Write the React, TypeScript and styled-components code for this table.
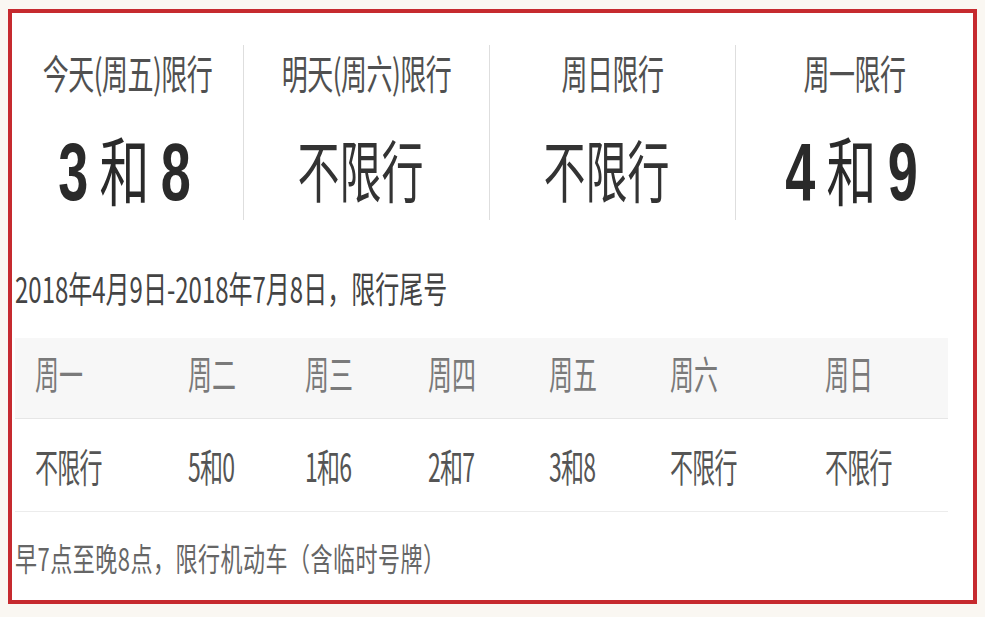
import React from 'react'
import styled, { createGlobalStyle } from 'styled-components'

const GlobalStyle = createGlobalStyle`
  html, body {
    margin: 0;
    padding: 0;
    background: #faf7f2;
  }
  body {
    font-family: "Noto Sans CJK SC", "Noto Sans", sans-serif;
  }
`

const Card = styled.div`
  box-sizing: border-box;
  width: 969px;
  height: 595px;
  margin: 9px 0 0 8px;
  border: 4px solid #c62a2f;
  background: #fff;
  display: flex;
  flex-direction: column;
`

// the screenshot is stretched vertically, so text glyphs are drawn taller than wide
const Tall = styled.span<{ $y: number }>`
  display: inline-block;
  transform: scaleY(${p => p.$y});
  transform-origin: center;
`

const Today = styled.div`
  display: grid;
  grid-template-columns: 231px 246px 246px 1fr;
  margin-top: 32px;
`

const DayCol = styled.div`
  height: 175px;
  box-sizing: border-box;
  padding-top: 9px;
  text-align: center;
  & + & {
    border-left: 1px solid #dedede;
  }
`

const DayTitle = styled.div`
  font-size: 26px;
  line-height: 36px;
  color: #505050;
  letter-spacing: -0.5px;
`

const DayValue = styled.div<{ $num?: boolean }>`
  margin-top: 38px;
  line-height: 80px;
  font-size: ${p => (p.$num ? '50px' : '42px')};
  color: ${p => (p.$num ? '#2a2a2a' : '#333')};
  white-space: nowrap;
  padding-right: ${p => (p.$num ? '6px' : '12px')};
`

const Digit = styled.span`
  font-family: "Liberation Sans", Arial, sans-serif;
  font-weight: 700;
  font-size: 54px;
`

const RangeLine = styled.div`
  margin-top: 48px;
  padding: 0 3px;
  font-size: 24px;
  line-height: 40px;
  color: #444;
  white-space: nowrap;
`

const Table = styled.table`
  margin: 30px 0 0 3px;
  width: 933px;
  border-collapse: collapse;
  table-layout: fixed;
`

const HeadRow = styled.tr`
  background: #f7f7f7;
  border-bottom: 1px solid #e6e6e6;
`

const BodyRow = styled.tr`
  border-bottom: 1px solid #ececec;
`

const HeadCell = styled.th`
  height: 80px;
  box-sizing: border-box;
  padding: 0 0 10px 20px;
  text-align: left;
  font-weight: 400;
  font-size: 24px;
  color: #7a7a7a;
`

const Cell = styled.td`
  height: 92px;
  padding: 0 0 0 20px;
  font-size: 23px;
  color: #555;
  letter-spacing: -0.8px;
`

const Note = styled.div`
  margin-top: 24px;
  padding: 0 3px;
  font-size: 22px;
  line-height: 40px;
  color: #666;
  letter-spacing: 0.5px;
  white-space: nowrap;
`

const days = [
  { title: '今天(周五)限行', value: ['3', '8'] },
  { title: '明天(周六)限行', value: null },
  { title: '周日限行', value: null },
  { title: '周一限行', value: ['4', '9'] },
]

const widths = [153, 117, 123, 121, 121, 155, 143]
const week = ['周一', '周二', '周三', '周四', '周五', '周六', '周日']
const plates = ['不限行', '5和0', '1和6', '2和7', '3和8', '不限行', '不限行']

const App = () => {
  return <>
    <GlobalStyle />
    <Card>
      <Today>
        {days.map(d => (
          <DayCol key={d.title}>
            <DayTitle><Tall $y={1.55}>{d.title}</Tall></DayTitle>
            {d.value ? (
              <DayValue $num>
                <Tall $y={1.5}>
                  <Digit>{d.value[0]}</Digit> 和 <Digit>{d.value[1]}</Digit>
                </Tall>
              </DayValue>
            ) : (
              <DayValue><Tall $y={1.6}>不限行</Tall></DayValue>
            )}
          </DayCol>
        ))}
      </Today>
      <RangeLine><Tall $y={1.5}>2018年4月9日-2018年7月8日，限行尾号</Tall></RangeLine>
      <Table>
        <colgroup>
          {widths.map((w, i) => <col key={i} style={{ width: w }} />)}
        </colgroup>
        <thead>
          <HeadRow>
            {week.map(w => <HeadCell key={w}><Tall $y={1.6}>{w}</Tall></HeadCell>)}
          </HeadRow>
        </thead>
        <tbody>
          <BodyRow>
            {plates.map((p, i) => <Cell key={i}><Tall $y={1.7}>{p}</Tall></Cell>)}
          </BodyRow>
        </tbody>
      </Table>
      <Note><Tall $y={1.45}>早7点至晚8点，限行机动车（含临时号牌）</Tall></Note>
    </Card>
  </>
}

export default App
